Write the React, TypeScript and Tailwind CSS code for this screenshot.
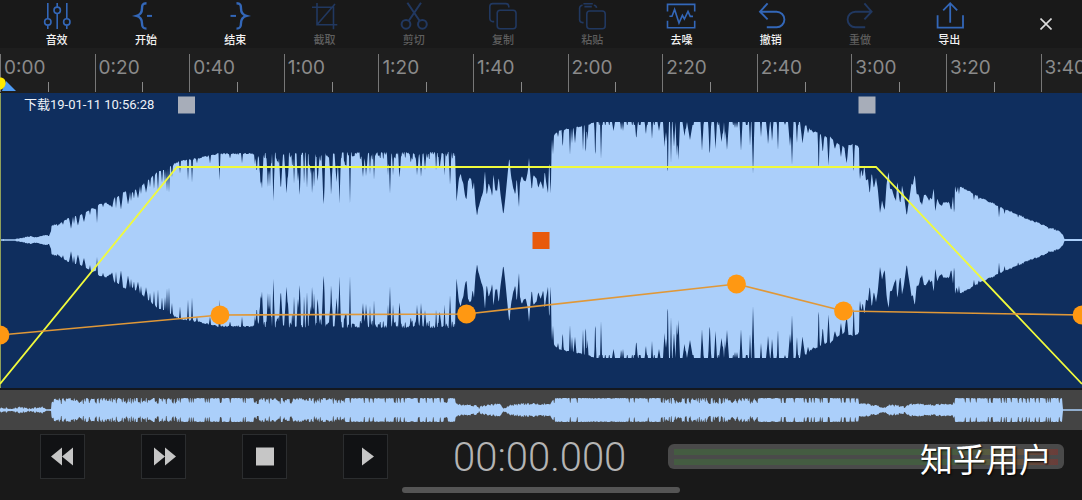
import type { ReactNode } from "react";

type Point = [number, number];

// Half height of the wave over time: outer envelope first, then the dips cut into it.
const envelope: Point[] = [
  [0, 1], [10, 1], [20, 2], [28, 4], [32, 4], [36, 3], [44, 5], [49, 5], [51, 10], [51.5, 15], [60, 17], [68, 22], [74, 24],
  [82, 26], [88, 30], [92, 33], [96, 32], [99, 36], [105, 38], [111, 35], [114, 43], [119, 45], [125, 49], [132, 48], [140, 54], [150, 62],
  [158, 69], [165, 71], [172, 75], [176, 78], [181, 80], [190, 81], [200, 83], [210, 85], [218, 87], [230, 87], [455, 88],
  [456.5, 39], [458.7, 61], [460.7, 67], [462, 60], [463.3, 57], [465.3, 43], [466.7, 42], [468, 60], [470, 63], [471.3, 61],
  [472.7, 50], [474, 59], [475.3, 37], [477, 26], [479.3, 36], [481.3, 43], [483.3, 50], [485, 70], [486.7, 45], [488.7, 58],
  [490.7, 52], [492.3, 44], [493.3, 68], [495.3, 50], [497, 50], [498.7, 64], [500.7, 45], [503.3, 25], [505.3, 43], [507.3, 64],
  [509.3, 84], [510.7, 68], [512.3, 57], [515.3, 45], [516.7, 64], [519, 33], [520, 58], [522, 65], [524, 60], [526, 60],
  [527.7, 68], [529, 83], [530.3, 66], [531.7, 50], [533.3, 65], [536.7, 62], [538.3, 52], [540.7, 60], [543.3, 50], [544.7, 71],
  [546, 60], [548, 48], [549.3, 83], [550.7, 41], [551.7, 101], [554.7, 107], [560, 110], [573, 113], [583, 115], [595, 118],
  [802, 118], [807, 114], [813, 109], [818, 108], [827, 103], [830, 104], [838, 97], [843, 95], [846, 92], [849, 96], [852, 96], [855, 96],
  [858, 95], [859, 93], [859.7, 59], [861.3, 72], [862.7, 63], [864.3, 76], [866, 60], [868, 62], [869.7, 46], [871.7, 69],
  [873.7, 52], [876, 63], [878, 50], [880, 28], [882, 40], [883.7, 33], [884.7, 30], [886.7, 58], [888.7, 70], [890, 52],
  [892, 52], [894.3, 44], [896, 40], [897.3, 60], [899, 45], [900.3, 36], [902, 55], [904, 45], [906.7, 25], [909.3, 42],
  [911.7, 58], [913, 56], [914.7, 67], [916.7, 46], [918.3, 47], [920, 40], [922, 36], [924, 46], [926, 46], [928.7, 40],
  [930.7, 43], [932, 41], [933.7, 54], [935.3, 28], [937.3, 43], [939.3, 37], [941.7, 35], [943.3, 39], [949.3, 38], [951.3, 30],
  [953, 45], [954.3, 23], [955, 54], [956.7, 48], [958, 54], [959, 46], [960, 54], [966.7, 51], [977, 45], [987, 40], [1000, 34],
  [1013, 28], [1027, 22], [1040, 17], [1053, 12], [1060, 9], [1063, 5], [1064.5, 1], [1082, 1],
];

// [position, half height at the bottom of the dip, half width]
const dips: [number, number, number][] = [
  [58, 15, 1], [63, 16, 1], [71, 12, 2], [74, 17, 1], [78, 15, 2], [84, 19, 2], [90, 26, 1], [97, 18, 1], [103, 34, 1],
  [112, 34, 2], [116, 32, 1], [121, 31, 2], [128, 36, 2], [131, 40, 1], [134, 42, 1], [138, 42, 2], [141, 46, 1], [146, 48, 2],
  [150, 54, 1], [154, 52, 1], [158, 50, 1], [162, 58, 1], [165, 58, 1], [167, 50, 1], [169, 48, 1], [172, 63, 1], [180, 68, 1],
  [188, 61, 1], [192, 59, 1], [197, 77, 1], [210, 78, 1], [219.5, 61, 1], [230, 83, 1], [242, 78, 1], [255, 76, 1], [257, 70, 1],
  [260.5, 56, 1.5], [262, 53, 1.5], [268, 53, 1.5], [270, 56, 1], [273.5, 45, 1.5], [281, 55, 2], [286.5, 50, 2.5], [294, 66, 1],
  [298, 60, 1.5], [299.5, 48, 1.5], [304, 66, 1], [307, 60, 1], [312, 57, 2], [314, 60, 1.5], [318, 65, 1.5], [323.5, 40, 2],
  [331, 57, 2], [336.5, 58, 2], [339.5, 37, 1.5], [350, 37, 1], [363, 64, 1.5], [366, 68, 1.5], [370, 66, 1], [374, 64, 1],
  [388, 66, 1], [390, 50, 1.2], [393, 70, 1], [399.5, 67, 1.5], [411, 78, 1], [417, 67, 1.5], [421, 65, 1.5], [425, 70, 1.5],
  [436, 76, 1], [440, 74, 1.5], [444.5, 66, 1], [450, 60, 1.5], [553, 86, 1], [558, 104, 1], [562.7, 91, 1], [570, 85, 1],
  [572, 98, 1], [575, 98, 1.5], [583, 90, 1], [585.7, 82, 1], [587.5, 100, 1], [595.3, 78, 1], [601, 84, 1], [613.5, 109, 1.5],
  [621, 113, 1], [623, 109, 1], [636.3, 100, 1.5], [646, 106, 1], [652, 101, 1], [659, 109, 1.5], [664.5, 93, 1.5], [666, 98, 1],
  [667.7, 56, 1], [671, 77, 1], [674, 93, 1.5], [677, 84, 1.5], [678.5, 80, 1.5], [684.5, 104, 2], [690, 100, 3], [702, 89, 1.5],
  [709.7, 82, 1.5], [715.5, 91, 1.5], [721.5, 98, 2.5], [725, 100, 1], [727, 90, 2], [735, 112, 1], [737, 112, 1], [741, 89, 1.5],
  [750, 97, 1], [753, 69, 1.5], [761, 103, 1], [768, 99, 2], [772, 102, 1.5], [778, 90, 1], [785, 115, 1], [790, 94, 2],
  [792, 75, 1.5], [797, 97, 1], [802.5, 97, 2.5], [808, 107, 1.5], [818.7, 63, 1], [822.7, 87, 1.5], [828.5, 75, 1.5],
  [835, 92, 2], [841, 83, 1.5], [846.5, 77, 2], [853.7, 63, 1], [974, 40, 1], [979, 41, 1], [999, 24, 1], [1004.5, 26, 1],
  [1018, 24, 1], [1049, 12, 1],
];

const overviewEnvelope: Point[] = [
  [0, 3], [6, 3], [12, 2], [20, 4], [28, 2], [34, 3], [43, 4], [48, 1], [51, 1], [51.5, 12], [455, 12], [456, 7], [476, 5],
  [479, 3], [482, 5], [500, 7], [504, 2], [508, 5], [520, 7], [550, 7], [551, 8], [555, 12], [858, 12], [859, 8], [878, 5], [883, 3], [890, 6],
  [905, 4], [910, 7], [933, 6], [953, 7], [955, 12], [1062, 12], [1063, 1], [1082, 1],
];

function noise(n: number) {
  const v = Math.sin(n * 127.1 + 11.7) * 43758.5453;
  return v - Math.floor(v);
}

function levelAt(points: Point[], x: number) {
  let i = 1;
  while (i < points.length - 1 && points[i][0] < x) i++;
  const [x0, y0] = points[i - 1];
  const [x1, y1] = points[i];
  return y0 + ((y1 - y0) * (x - x0)) / (x1 - x0);
}

function toPath(level: (x: number) => number, mid: number) {
  const top: string[] = [];
  const bottom: string[] = [];
  for (let x = 0; x <= 1082; x += 0.5) {
    const h = level(x);
    top.push(`${x} ${(mid - h).toFixed(1)}`);
    bottom.unshift(`${x} ${(mid + h).toFixed(1)}`);
  }
  return `M${top.join("L")}L${bottom.join("L")}Z`;
}

const wavePath = toPath((x) => {
  const base = levelAt(envelope, x);
  let h = base;
  for (const [pos, low, width] of dips) {
    const d = Math.abs(x - pos);
    if (d < width) h = Math.min(h, low + ((base - low) * d) / width);
  }
  // small ripple along the edge
  const n = noise(Math.floor(x));
  if (x < 50) return Math.max(0.7, h - n);
  if (x > 255 && x < 350) return h - n * n * 14;
  if (x > 350 && x < 455) return h - n * n * 7;
  if (x > 595 && x < 802) return h - (n > 0.85 ? 3 : 0);
  return x > 1062 ? h : h - n * 1.5;
}, 147);

const overviewPath = toPath((x) => {
  const base = levelAt(overviewEnvelope, x);
  const n = noise(Math.floor(x) + 2000);
  if (base < 10) return Math.max(0.7, base - n * 2);
  const busy = (x < 180) || (x > 255 && x < 345) || (x > 665 && x < 760);
  return base - (busy ? n * n * 6 : n > 0.85 ? 5 * n : n * n);
}, 20);

const fadeLine = "0,291 177,74 876,74 1082,291";

const volumePoints: Point[] = [
  [0, 242], [220, 222], [466.5, 221], [736.5, 191], [843.5, 218], [1082, 222],
];

const times = ["0:00", "0:20", "0:40", "1:00", "1:20", "1:40", "2:00", "2:20", "2:40", "3:00", "3:20", "3:40"];

const pct = (x: number) => `${(x / 1082) * 100}%`;

interface Tool {
  label: string;
  icon: ReactNode;
  disabled?: boolean;
}

const bracePath =
  "M15.5 1.2C11.5 1.2 11 3.2 11 6.5C11 10.5 9.5 12.8 5.5 13.9C9.5 15 11 17.3 11 21.3C11 24.6 11.5 26.6 15.5 26.6";

const tools: Tool[] = [
  {
    label: "音效",
    icon: (
      <>
        <path d="M5.8 1V16.6M5.8 23.2V27M15.2 1V5M15.2 11.6V27M24.8 1V16.6M24.8 23.2V27" />
        <circle cx="5.8" cy="19.9" r="3.2" />
        <circle cx="15.2" cy="8.3" r="3.2" />
        <circle cx="24.8" cy="19.9" r="3.2" />
      </>
    ),
  },
  {
    label: "开始",
    icon: (
      <>
        <path d={bracePath} strokeWidth="2.4" />
        <path d="M16 13.9H21" strokeWidth="2" />
      </>
    ),
  },
  {
    label: "结束",
    icon: (
      <g transform="translate(32 0) scale(-1 1)">
        <path d={bracePath} strokeWidth="2.4" />
        <path d="M16 13.9H21.5" strokeWidth="2" />
      </g>
    ),
  },
  {
    label: "截取",
    disabled: true,
    icon: <path d="M8 1V22.7H28.3M3 5.3H24.5V27.3M8.4 22.3L26 2" />,
  },
  {
    label: "剪切",
    disabled: true,
    icon: (
      <g strokeWidth="2">
        <circle cx="7" cy="22.3" r="4.4" />
        <circle cx="23.4" cy="22.3" r="4.4" />
        <path d="M8.4 0.7L20.6 18.8M22 0.7L9.8 18.8" />
      </g>
    ),
  },
  {
    label: "复制",
    disabled: true,
    icon: (
      <>
        <path d="M20.8 5.4V4.3A3 3 0 0 0 17.8 1.6H4.8A3 3 0 0 0 1.8 4.6V16.6A3 3 0 0 0 4.8 19.6H6.2" />
        <rect x="9.2" y="8.3" width="18.8" height="18.4" rx="3" />
      </>
    ),
  },
  {
    label: "粘贴",
    disabled: true,
    icon: (
      <>
        <path d="M19.6 5.8A3 3 0 0 0 16.8 3.2M5.6 3.2A3 3 0 0 0 2.6 6.2V17.8A3 3 0 0 0 5.6 20.6H6.6M6.4 1.8H15.8M7.4 4.6H14.8" />
        <rect x="9.8" y="9" width="18.4" height="17.8" rx="3" />
      </>
    ),
  },
  {
    label: "去噪",
    icon: (
      <>
        <path d="M1.5 9.6V2.4H28.7V9.6M1.5 18.8V25.8H28.7V18.8" />
        <path d="M3.4 14.2H6L8.6 7.4L13 21L16.4 13.4L18.4 17L22 9.4L24.2 14.4H27" />
      </>
    ),
  },
  {
    label: "撤销",
    icon: <path d="M11.6 1.4L4 9.7L11.6 17.4M4 9.7H20.6A7.8 7.8 0 0 1 20.6 25.3H10.8" strokeWidth="1.9" />,
  },
  {
    label: "重做",
    disabled: true,
    icon: (
      <g transform="translate(31 0) scale(-1 1)">
        <path d="M11.6 1.4L4.4 9.7L11.6 17.4M4.4 9.7H20.6A7.8 7.8 0 0 1 20.6 25.3H10.8" strokeWidth="1.9" />
      </g>
    ),
  },
  {
    label: "导出",
    icon: <path d="M3.6 13.2V25.7H29V13.2M16.2 20.8V1.2M9.2 8.4L16.2 1.2L23.2 8.4" strokeWidth="1.8" />,
  },
];

const transport = [
  { label: "快退", d: "M11 22.5L22 13.5V31.5ZM22 22.5L33 13.5V31.5Z" },
  { label: "快进", d: "M13 13.5L24 22.5L13 31.5ZM24 13.5L35 22.5L24 31.5Z" },
  { label: "停止", d: "M14 13.5H32V31.5H14Z" },
  { label: "播放", d: "M19 13.5L31 22.5L19 31.5Z" },
];

function Toolbar() {
  return (
    <header className="flex h-12 items-center bg-[#191919] pl-3">
      <nav className="flex flex-1">
        {tools.map((t) => (
          <button
            key={t.label}
            disabled={t.disabled}
            className={`flex flex-1 flex-col items-center gap-[2px] pt-[2px] text-[11px] leading-4 font-medium ${t.disabled ? "text-[#5e5e5e]" : "text-[#f2f2f2]"}`}
          >
            <svg
              viewBox="0 0 30 28"
              className={`h-7 w-[30px] overflow-visible ${t.disabled ? "text-[#213860]" : "text-[#3367b8]"}`}
              fill="none"
              stroke="currentColor"
              strokeWidth="1.6"
            >
              {t.icon}
            </svg>
            {t.label}
          </button>
        ))}
      </nav>
      <button aria-label="关闭" className="mr-5 ml-9 flex w-8 justify-center">
        <svg viewBox="0 0 12 12" className="h-3 w-3" stroke="#dcdcdc" strokeWidth="1.6">
          <path d="M0.5 0.5L11.5 11.5M11.5 0.5L0.5 11.5" />
        </svg>
      </button>
    </header>
  );
}

function Ruler() {
  return (
    <div className="relative flex overflow-hidden bg-[#1e1e1e] pt-[6px] pb-px">
      {times.map((t) => (
        <div key={t} className="grid h-[38px] w-[8.743%] shrink-0 grid-cols-2 border-l border-[#777]">
          <span className="pl-[3px] text-[19px] leading-7 whitespace-nowrap text-[#8a8a8a]">{t}</span>
          <i className="h-[10px] self-end border-l border-[#888]" />
        </div>
      ))}
      <svg viewBox="0 0 18 16" className="absolute bottom-px left-0 h-4 w-[18px]">
        <path d="M6 5L16 15H2Z" fill="#4f9cf5" />
        <path d="M0 1.5C4 1.5 6 4 5.5 8C5 11.5 2 13.5 0 13.5Z" fill="#ffea00" />
      </svg>
    </div>
  );
}

function Track() {
  return (
    <section className="relative border-b-2 border-[#14181f] bg-[#0f2e5e]">
      <svg className="block h-[295px] w-full">
        <svg viewBox="0 0 1082 295" width="100%" height="295" preserveAspectRatio="none">
          <path d={wavePath} fill="#abcffa" />
          <path d="M0.5 0V295" stroke="#8fa05a" />
          <polyline points={fadeLine} fill="none" stroke="#f0fa3c" strokeWidth="1.8" vectorEffect="non-scaling-stroke" />
          <polyline
            points={volumePoints.map((p) => p.join(",")).join(" ")}
            fill="none"
            stroke="#e09838"
            strokeWidth="1.6"
            vectorEffect="non-scaling-stroke"
          />
        </svg>
        {volumePoints.map(([x, y]) => (
          <circle key={x} cx={pct(x)} cy={y} r="9.4" fill="#ff9812" />
        ))}
        <rect x={pct(178)} y="3.5" width="17" height="17" fill="#a7adb9" />
        <rect x={pct(858.5)} y="3.5" width="17" height="17" fill="#a7adb9" />
        <rect x={pct(532.5)} y="139" width="17" height="17" fill="#e85a0c" />
      </svg>
      <span className="absolute top-1 left-6 font-['Roboto','Noto_Sans_CJK_SC',sans-serif] text-[13px] leading-4 text-[#eef2f8]">
        下载19-01-11 10:56:28
      </span>
    </section>
  );
}

function Meter() {
  return (
    <div role="meter" aria-label="电平" aria-valuenow={0} className="flex h-[25px] flex-1 flex-col justify-center gap-1 rounded-md bg-[#4a4a4a] px-[6px]">
      <div className="h-[6px] bg-linear-to-r from-[#445c41] from-70% via-[#5c5a40] via-85% to-[#6a3d3a]" />
      <div className="h-[6px] bg-linear-to-r from-[#445c41] from-70% via-[#5c5a40] via-85% to-[#6a3d3a]" />
    </div>
  );
}

export default function App() {
  return (
    <div className="relative min-h-screen overflow-hidden bg-[#191919] font-['Inter','Noto_Sans_CJK_SC',sans-serif]">
      <Toolbar />
      <Ruler />
      <Track />
      <svg viewBox="0 0 1082 40" preserveAspectRatio="none" className="block h-10 w-full bg-[#444]">
        <path d={overviewPath} fill="#abcffa" />
      </svg>
      <footer className="flex items-start pt-1 pr-[18px] pl-10">
        <div className="flex gap-14">
          {transport.map((b) => (
            <button key={b.label} aria-label={b.label} className="h-[45px] w-[45px] border border-[#2b2d2f] bg-[#111214]">
              <svg viewBox="1 1 43 43" className="h-full w-full" fill="#c6c6c6">
                <path d={b.d} />
              </svg>
            </button>
          ))}
        </div>
        <time className="ml-16 w-[216px] pl-px font-['Roboto',sans-serif] text-[40px] leading-[48px] font-light text-[#b4b4b4]">00:00.000</time>
        <div className="flex flex-1 pt-[10px]">
          <Meter />
        </div>
      </footer>
      <div className="mx-auto mt-[5px] h-[6px] w-[278px] rounded-full bg-[#555]" />
      <span className="absolute right-[30px] bottom-4 text-[33px] leading-12 text-white [text-shadow:1px_1px_2px_#000]">知乎用户</span>
    </div>
  );
}
